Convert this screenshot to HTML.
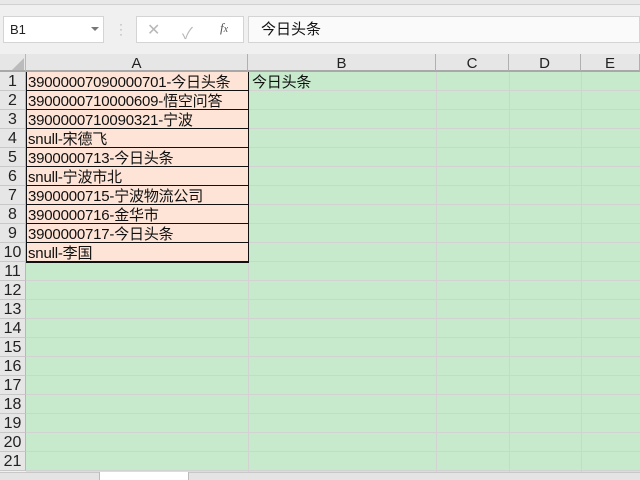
<!DOCTYPE html>
<html><head><meta charset="utf-8"><style>
*{margin:0;padding:0;box-sizing:border-box}
body{width:640px;height:480px;overflow:hidden;background:#f0f0f0;font-family:"Liberation Sans","Noto Sans CJK SC",sans-serif;position:relative}
.a{position:absolute}
.cell{position:absolute;font-size:15px;line-height:19px;color:#111;white-space:nowrap;letter-spacing:-0.2px}
.rh{position:absolute;left:0;width:26px;height:19px;background:#e6e6e6;border-bottom:1px solid #c8c8c8;border-right:1px solid #b8b8b8;font-size:16px;line-height:20px;text-align:center;color:#222}
.ch{position:absolute;top:54px;height:18px;background:#e6e6e6;border-right:1px solid #b0b0b0;border-bottom:2px solid #a8a8a8;font-size:15px;line-height:20px;text-align:center;color:#222}
</style></head><body>
<div class="a" style="left:0;top:0;width:640px;height:5px;background:#e8e8e8;border-bottom:1px solid #d0d0d0"></div>
<div class="a" style="left:3px;top:16px;width:101px;height:27px;background:#fff;border:1px solid #d4d4d4;font-size:13px;line-height:25px;padding-left:6px;color:#222">B1</div>
<div class="a" style="left:91px;top:27px;width:0;height:0;border-left:4px solid transparent;border-right:4px solid transparent;border-top:4px solid #777"></div>
<div class="a" style="left:119px;top:22px;color:#aaa;font-size:12px;line-height:5px">·<br>·<br>·</div>
<div class="a" style="left:136px;top:16px;width:108px;height:27px;background:#fff;border:1px solid #d4d4d4"></div>
<div class="a" style="left:147px;top:20px;color:#b8b8b8;font-size:16px">✕</div>
<div class="a" style="left:182px;top:20px;color:#b8b8b8;font-size:16px">✓</div>
<div class="a" style="left:220px;top:20px;color:#555;font-size:13px;font-style:italic;font-family:'Liberation Serif',serif">f<span style="font-size:10px">x</span></div>
<div class="a" style="left:248px;top:16px;width:392px;height:27px;background:#fafafa;border:1px solid #d4d4d4;font-size:15px;line-height:25px;padding-left:12px;color:#111">今日头条</div>
<div class="a" style="left:0;top:54px;width:26px;height:18px;background:#e6e6e6;border-right:1px solid #b8b8b8;border-bottom:2px solid #a8a8a8"></div>
<div class="a" style="left:12px;top:58px;width:0;height:0;border-left:12px solid transparent;border-bottom:12px solid #bbb"></div>
<div class="ch" style="left:26px;width:222px">A</div>
<div class="ch" style="left:248px;width:188px">B</div>
<div class="ch" style="left:436px;width:73px">C</div>
<div class="ch" style="left:509px;width:72px">D</div>
<div class="ch" style="left:581px;width:59px">E</div>
<div class="a" style="left:26px;top:72px;width:614px;height:400px;background:#c7eacc;
background-image:repeating-linear-gradient(to bottom,transparent 0 18px,#d2d2d2 18px 19px);"></div>
<div class="a" style="left:248px;top:72px;width:1px;height:400px;background:#d2d2d2"></div>
<div class="a" style="left:436px;top:72px;width:1px;height:400px;background:#d2d2d2"></div>
<div class="a" style="left:509px;top:72px;width:1px;height:400px;background:#d2d2d2"></div>
<div class="a" style="left:581px;top:72px;width:1px;height:400px;background:#d2d2d2"></div>
<div class="a" style="left:26px;top:72px;width:223px;height:191px;background:#fde4d7;border:1px solid #111;border-top:none;
background-image:repeating-linear-gradient(to bottom,transparent 0 18px,#111 18px 19px)"></div>
<div class="cell" style="left:28px;top:73px">39000007090000701-今日头条</div>
<div class="cell" style="left:28px;top:92px">3900000710000609-悟空问答</div>
<div class="cell" style="left:28px;top:111px">3900000710090321-宁波</div>
<div class="cell" style="left:28px;top:130px">snull-宋德飞</div>
<div class="cell" style="left:28px;top:149px">3900000713-今日头条</div>
<div class="cell" style="left:28px;top:168px">snull-宁波市北</div>
<div class="cell" style="left:28px;top:187px">3900000715-宁波物流公司</div>
<div class="cell" style="left:28px;top:206px">3900000716-金华市</div>
<div class="cell" style="left:28px;top:225px">3900000717-今日头条</div>
<div class="cell" style="left:28px;top:244px">snull-李国</div>
<div class="cell" style="left:252px;top:73px">今日头条</div>
<div class="rh" style="top:72px">1</div><div class="rh" style="top:91px">2</div><div class="rh" style="top:110px">3</div><div class="rh" style="top:129px">4</div><div class="rh" style="top:148px">5</div><div class="rh" style="top:167px">6</div><div class="rh" style="top:186px">7</div><div class="rh" style="top:205px">8</div><div class="rh" style="top:224px">9</div><div class="rh" style="top:243px">10</div><div class="rh" style="top:262px">11</div><div class="rh" style="top:281px">12</div><div class="rh" style="top:300px">13</div><div class="rh" style="top:319px">14</div><div class="rh" style="top:338px">15</div><div class="rh" style="top:357px">16</div><div class="rh" style="top:376px">17</div><div class="rh" style="top:395px">18</div><div class="rh" style="top:414px">19</div><div class="rh" style="top:433px">20</div><div class="rh" style="top:452px">21</div>
<div class="a" style="left:0;top:472px;width:640px;height:8px;background:#e4e4e4;border-top:1px solid #c8c8c8"></div>
<div class="a" style="left:99px;top:472px;width:90px;height:8px;background:#fff;border-left:1px solid #bbb;border-right:1px solid #bbb"></div>
</body></html>
